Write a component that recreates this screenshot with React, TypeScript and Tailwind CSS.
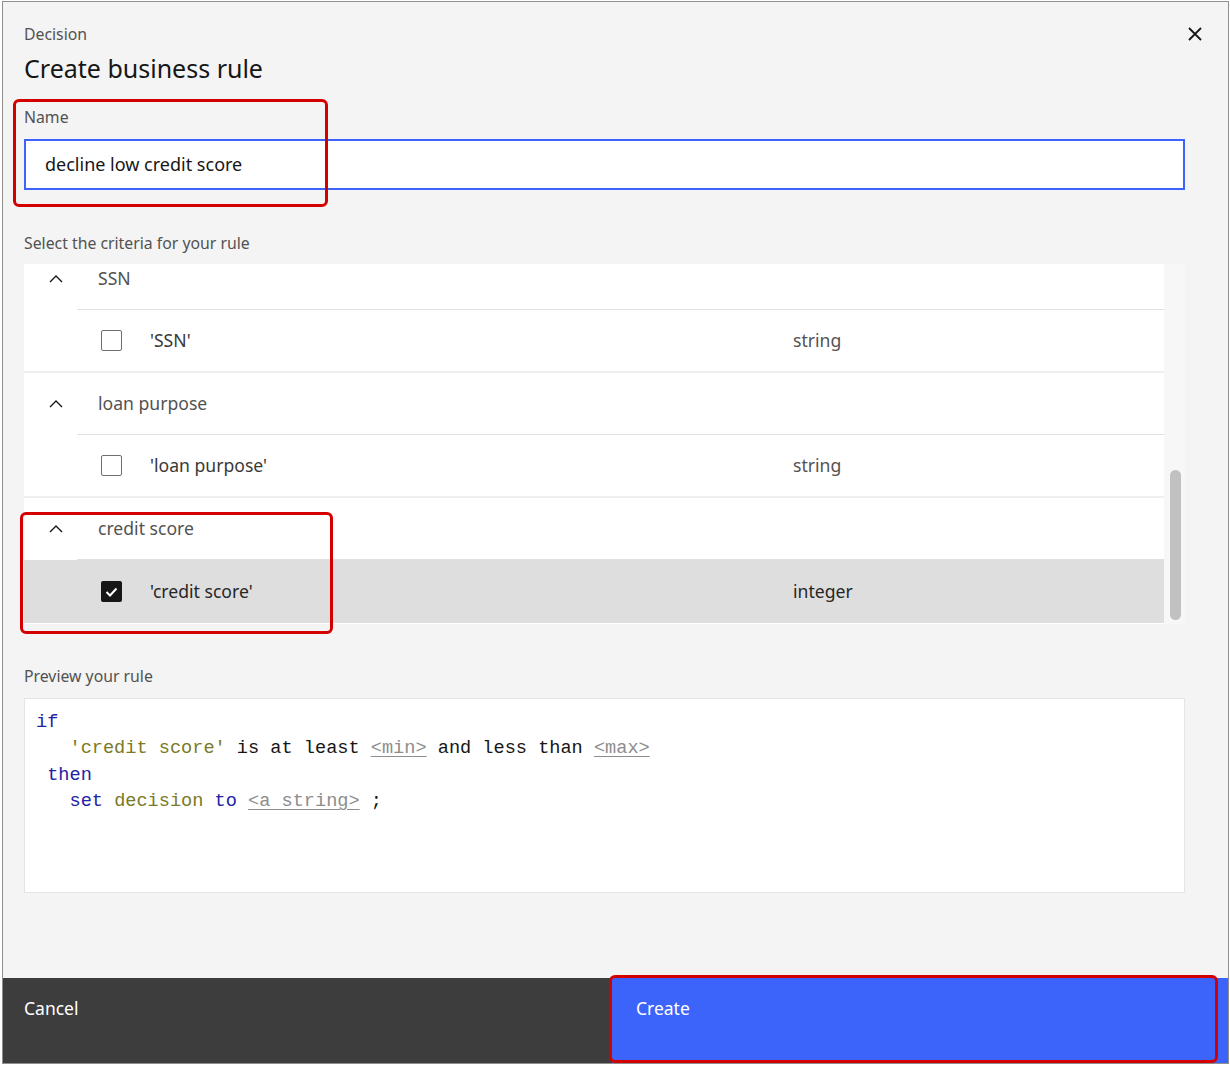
import React from "react";

type Field = { name: string; type: string; checked?: boolean };
type Group = { label: string; field: Field };

const groups: Group[] = [
  { label: "SSN", field: { name: "'SSN'", type: "string" } },
  { label: "loan purpose", field: { name: "'loan purpose'", type: "string" } },
  { label: "credit score", field: { name: "'credit score'", type: "integer", checked: true } },
];

function ChevronUp() {
  return (
    <svg width="14" height="8" viewBox="0 0 14 8" fill="none">
      <path d="M1 7 L7 1 L13 7" stroke="#161616" strokeWidth="1.4" />
    </svg>
  );
}

function Checkbox({ checked }: { checked?: boolean }) {
  if (checked) {
    return (
      <div className="flex h-[21px] w-[21px] items-center justify-center rounded-[2px] bg-[#161616]">
        <svg width="13" height="10" viewBox="0 0 13 10" fill="none">
          <path d="M1.5 5 L5 8.5 L11.5 1.5" stroke="#ffffff" strokeWidth="2" />
        </svg>
      </div>
    );
  }
  return <div className="h-[21px] w-[21px] rounded-[2px] border border-[#6f6f6f] bg-white" />;
}

function CriteriaGroup({ group, last }: { group: Group; last: boolean }) {
  const f = group.field;
  return (
    <div>
      <div className="flex h-[62px]">
        <div className="flex w-[53px] items-center pl-[25px]">
          <ChevronUp />
        </div>
        <div className="flex flex-1 items-center border-b border-[#e0e0e0] pl-[21px] text-[17.6px] text-[#525252]">
          {group.label}
        </div>
      </div>
      <div
        className={
          "flex h-[63px] items-center pl-[77px] text-[17.6px] " +
          (f.checked ? "bg-[#dedede] text-[#262626]" : "bg-white text-[#393939]") +
          (last ? "" : " border-b-2 border-[#efefef]")
        }
      >
        <Checkbox checked={f.checked} />
        <div className="ml-[28px] w-[643px]">{f.name}</div>
        <div className={f.checked ? "text-[#262626]" : "text-[#525252]"}>{f.type}</div>
      </div>
    </div>
  );
}

function Ph({ children }: { children: React.ReactNode }) {
  return <span className="text-[#8d8d8d] underline underline-offset-[3px]">{children}</span>;
}

export default function App() {
  return (
    <div
      className="relative h-[1066px] w-[1230px] overflow-hidden bg-white"
      style={{ fontFamily: '"Noto Sans", "Liberation Sans", sans-serif' }}
    >
      <div className="ml-[2px] mt-[1px] flex h-[1063px] w-[1227px] flex-col border border-[#8f8f8f] bg-[#f4f4f4]">
        {/* Header */}
        <div className="flex items-start justify-between pl-[21px] pr-[26px] pt-[23px]">
          <div>
            <div className="text-[15.8px] leading-[18px] text-[#525252]">Decision</div>
            <h2 className="mt-[9px] text-[25px] leading-[32px] text-[#161616]">Create business rule</h2>
          </div>
          <button className="mt-[2px]">
            <svg width="14" height="14" viewBox="0 0 14 14" fill="none">
              <path d="M1 1 L13 13 M13 1 L1 13" stroke="#161616" strokeWidth="1.8" />
            </svg>
          </button>
        </div>

        {/* Body */}
        <div className="flex flex-1 flex-col pl-[21px] pr-[43px]">
          <div className="mt-[24px] text-[15.8px] leading-[18px] text-[#525252]">Name</div>
          <div className="mt-[13px] flex h-[51px] items-center border-2 border-[#3d63fa] bg-white pl-[19px] text-[18px] text-[#161616]">
            decline low credit score
          </div>

          <div className="mt-[44px] text-[15.8px] leading-[18px] text-[#525252]">Select the criteria for your rule</div>
          <div className="mt-[12px] flex h-[360px] bg-white">
            <div className="flex-1 overflow-hidden">
              <div className="-mt-[16px]">
                {groups.map((g, i) => (
                  <CriteriaGroup key={g.label} group={g} last={i === groups.length - 1} />
                ))}
              </div>
            </div>
            <div className="w-[21px] bg-[#f7f7f7] pl-[6px] pt-[206px]">
              <div className="h-[150px] w-[11px] rounded-full bg-[#c1c1c1]" />
            </div>
          </div>

          <div className="mt-[43px] text-[15.8px] leading-[18px] text-[#525252]">Preview your rule</div>
          <div
            className="mt-[13px] h-[195px] whitespace-pre border border-[#e4e4e4] bg-white pl-[11px] pt-[11px] text-[18.6px] leading-[26.4px] text-[#161616]"
            style={{ fontFamily: '"Liberation Mono", "DejaVu Sans Mono", monospace' }}
          >
            <div>
              <span className="text-[#2323a5]">if</span>
            </div>
            <div>
              {"   "}
              <span className="text-[#7a7a28]">'credit score'</span> is at least <Ph>&lt;min&gt;</Ph> and less than{" "}
              <Ph>&lt;max&gt;</Ph>
            </div>
            <div>
              {" "}
              <span className="text-[#2323a5]">then</span>
            </div>
            <div>
              {"   "}
              <span className="text-[#2323a5]">set</span> <span className="text-[#7a7a28]">decision</span>{" "}
              <span className="text-[#2323a5]">to</span> <Ph>&lt;a string&gt;</Ph> ;
            </div>
          </div>
        </div>

        {/* Footer */}
        <div className="flex h-[85px] text-[17.5px] text-white">
          <button className="flex w-[609px] items-start bg-[#3d3d3d] pl-[21px] pt-[17px] text-left">Cancel</button>
          <button className="flex flex-1 items-start bg-[#3c63fa] pl-[24px] pt-[17px] text-left">Create</button>
        </div>
      </div>

      {/* Annotation outlines */}
      <div className="pointer-events-none absolute left-[13px] top-[99px] h-[108px] w-[315px] rounded-[6px] border-[3px] border-[#d40000]" />
      <div className="pointer-events-none absolute left-[20px] top-[512px] h-[122px] w-[313px] rounded-[6px] border-[3px] border-[#d40000]" />
      <div className="pointer-events-none absolute left-[609px] top-[975px] h-[88px] w-[609px] rounded-[6px] border-[3px] border-[#d40000]" />
    </div>
  );
}
